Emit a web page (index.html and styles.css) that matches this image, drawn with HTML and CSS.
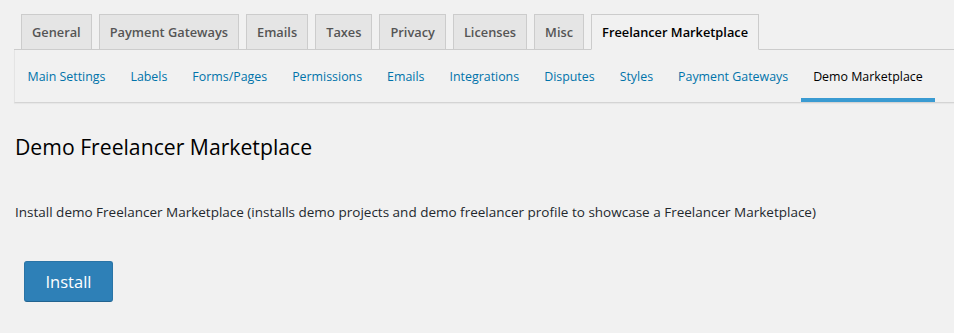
FILE: index.html
```html
<!DOCTYPE html>
<html lang="en">

<head>
    <meta charset="UTF-8" />
    <title>Settings - Freelancer Marketplace</title>
    <link rel="stylesheet" href="styles.css">
</head>

<body>
    <div class="wrap">
        <nav class="nav-tabs">
            <a href="#" class="nav-tab">General</a>
            <a href="#" class="nav-tab">Payment Gateways</a>
            <a href="#" class="nav-tab">Emails</a>
            <a href="#" class="nav-tab">Taxes</a>
            <a href="#" class="nav-tab">Privacy</a>
            <a href="#" class="nav-tab">Licenses</a>
            <a href="#" class="nav-tab">Misc</a>
            <a href="#" class="nav-tab active">Freelancer Marketplace</a>
        </nav>

        <ul class="subnav">
            <li><a href="#">Main Settings</a></li>
            <li><a href="#">Labels</a></li>
            <li><a href="#">Forms/Pages</a></li>
            <li><a href="#">Permissions</a></li>
            <li><a href="#">Emails</a></li>
            <li><a href="#">Integrations</a></li>
            <li><a href="#">Disputes</a></li>
            <li><a href="#">Styles</a></li>
            <li><a href="#">Payment Gateways</a></li>
            <li><a href="#" class="current">Demo Marketplace</a></li>
        </ul>

        <section class="demo">
            <h2>Demo Freelancer Marketplace</h2>
            <p>Install demo Freelancer Marketplace (installs demo projects and demo freelancer profile to showcase a Freelancer Marketplace)</p>
            <button type="button" class="button-primary">Install</button>
        </section>
    </div>
</body>

</html>
```

FILE: styles.css
```css
/* Base */
* {
    margin: 0;
    padding: 0;
    box-sizing: border-box;
}

body {
    background-color: #f1f1f1;
    color: #23282d;
    font-family: 'Open Sans', 'Noto Sans', sans-serif;
    font-size: 13px;
    line-height: 1.4;
}

a {
    text-decoration: none;
}

.wrap {
    padding-left: 14px;
}

/* Top tabs */
.nav-tabs {
    display: flex;
    gap: 7px;
    padding: 14px 0 0 7px;
    border-bottom: 1px solid #ccc;
}

.nav-tab {
    display: block;
    height: 36px;
    margin-bottom: -1px;
    padding: 0 10px;
    background-color: #e5e5e5;
    border: 1px solid #ccc;
    color: #555;
    font-size: 12.8px;
    font-weight: 600;
    line-height: 35px;
}

.nav-tab.active {
    background-color: #f1f1f1;
    border-bottom-color: #f1f1f1;
    color: #000;
}

/* Sub navigation */
.subnav {
    display: flex;
    height: 53px;
    list-style: none;
    border-left: 1px solid #e4e4e4;
    border-bottom: 1px solid #d4d4d4;
    box-shadow: 0 1px 1px rgba(0, 0, 0, 0.04);
}

.subnav a {
    display: block;
    height: 52px;
    padding: 0 12.5px;
    color: #0073aa;
    line-height: 53px;
    font-size: 12.4px;
}

.subnav a.current {
    color: #000;
    border-bottom: 4px solid #3a9bd2;
}

/* Demo section */
.demo {
    padding: 30px 0 0 1px;
}

.demo h2 {
    color: #000;
    font-size: 21.2px;
    font-weight: 500;
    line-height: 28px;
}

.demo p {
    margin-top: 42px;
    font-size: 13.5px;
    color: #23282d;
}

.button-primary {
    margin: 39px 0 0 9px;
    width: 89px;
    height: 41px;
    background-color: #2e80b7;
    border: 1px solid #2a74a6;
    border-bottom-color: #22638f;
    border-radius: 3px;
    color: #fff;
    font-family: inherit;
    font-size: 16.5px;
    cursor: pointer;
}
```
